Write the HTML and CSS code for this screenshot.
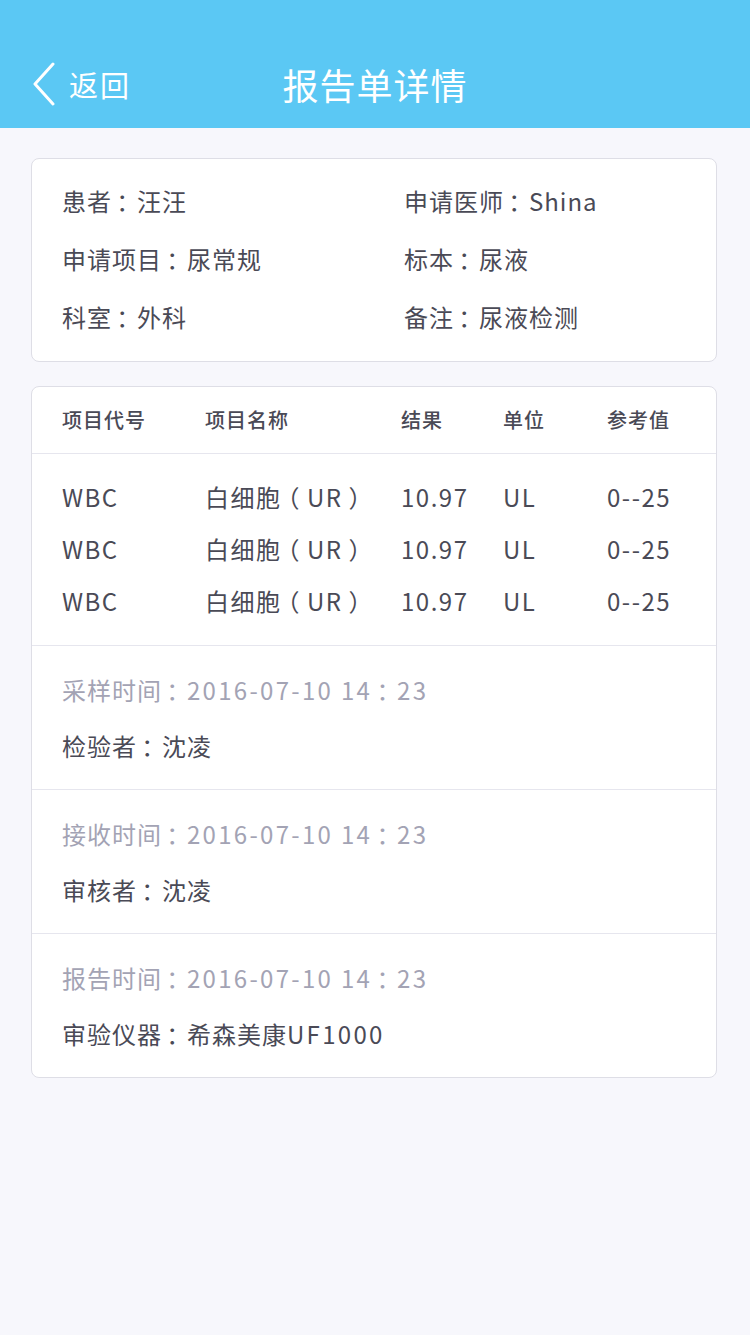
FILE: index.html
```html
<!DOCTYPE html>
<html lang="zh-CN">
<head>
<meta charset="utf-8">
<title>报告单详情</title>
<link rel="stylesheet" href="styles.css">
</head>
<body>
<header class="topbar">
  <div class="back">
    <svg class="chev" width="26" height="44" viewBox="0 0 26 44"><polyline points="22,2 4,22 22,42" fill="none" stroke="#fff" stroke-width="3" stroke-linecap="round" stroke-linejoin="round"/></svg>
    <span class="back-text">返回</span>
  </div>
  <h1 class="title">报告单详情</h1>
</header>
<main class="content">
  <section class="card info">
    <div class="info-row"><span>患者<span class="p">：</span>汪汪</span><span>申请医师<span class="p">：</span>Shina</span></div>
    <div class="info-row"><span>申请项目<span class="p">：</span>尿常规</span><span>标本<span class="p">：</span>尿液</span></div>
    <div class="info-row"><span>科室<span class="p">：</span>外科</span><span>备注<span class="p">：</span>尿液检测</span></div>
  </section>
  <section class="card results">
    <div class="grid head">
      <span>项目代号</span><span>项目名称</span><span>结果</span><span>单位</span><span>参考值</span>
    </div>
    <div class="rows">
      <div class="grid row"><span>WBC</span><span>白细胞<span class="pp">（</span>UR<span class="pp">）</span></span><span>10.97</span><span>UL</span><span>0--25</span></div>
      <div class="grid row"><span>WBC</span><span>白细胞<span class="pp">（</span>UR<span class="pp">）</span></span><span>10.97</span><span>UL</span><span>0--25</span></div>
      <div class="grid row"><span>WBC</span><span>白细胞<span class="pp">（</span>UR<span class="pp">）</span></span><span>10.97</span><span>UL</span><span>0--25</span></div>
    </div>
    <div class="meta">
      <div class="muted">采样时间<span class="p">：</span><span class="num">2016-07-10 14</span><span class="p">：</span><span class="num">23</span></div>
      <div class="dark">检验者<span class="p">：</span>沈凌</div>
    </div>
    <div class="meta">
      <div class="muted">接收时间<span class="p">：</span><span class="num">2016-07-10 14</span><span class="p">：</span><span class="num">23</span></div>
      <div class="dark">审核者<span class="p">：</span>沈凌</div>
    </div>
    <div class="meta">
      <div class="muted">报告时间<span class="p">：</span><span class="num">2016-07-10 14</span><span class="p">：</span><span class="num">23</span></div>
      <div class="dark">审验仪器<span class="p">：</span>希森美康<span class="num">UF1000</span></div>
    </div>
  </section>
</main>
</body>
</html>
```
FILE: styles.css
```css
* { box-sizing: border-box; }
html, body {
  margin: 0;
  padding: 0;
  background: #f7f7fc;
  font-family: "Noto Sans CJK SC", "Noto Sans", sans-serif;
  color: #4a4a56;
}
/* half-width punctuation, padded back to a full em so the glyph sits centred */
.p, .pp {
  font-feature-settings: "halt" 1;
}
.p { padding: 0 0.32em 0 0.18em; }
.pp { padding: 0 0.25em; }
.num {
  letter-spacing: 2.3px;
}
.topbar {
  height: 128px;
  background: #5bc8f4;
  position: relative;
  display: flex;
  align-items: center;
  justify-content: center;
  padding-top: 40px;
}
.back {
  position: absolute;
  left: 31px;
  top: 62px;
  display: flex;
  align-items: center;
  gap: 12px;
}
.chev { display: block; }
.back-text {
  color: #fff;
  font-size: 29px;
  letter-spacing: 2px;
  line-height: 44px;
}
.title {
  margin: 0;
  color: #fff;
  font-size: 36px;
  font-weight: 400;
  letter-spacing: 1px;
  line-height: 48px;
}
.content {
  padding: 30px 33px 0 31px;
  display: flex;
  flex-direction: column;
  gap: 24px;
}
.card {
  background: #fff;
  border: 1px solid #dedee6;
  border-radius: 8px;
}
.info {
  padding: 13px 0 15px 30px;
}
.info-row {
  display: grid;
  grid-template-columns: 342px 1fr;
  font-size: 24px;
  line-height: 58px;
  letter-spacing: 1px;
}
.grid {
  display: grid;
  grid-template-columns: 143px 196px 102px 104px 1fr;
  padding-left: 30px;
}
.head {
  height: 67px;
  align-items: center;
  font-size: 20px;
  font-weight: 500;
  letter-spacing: 1px;
  padding-bottom: 2px;
  border-bottom: 1px solid #e6e6ee;
}
.rows {
  padding: 17px 0 18px;
  border-bottom: 1px solid #e6e6ee;
}
.row {
  font-size: 24px;
  line-height: 52px;
  letter-spacing: 1.5px;
}
.meta {
  padding: 16px 0 15px 30px;
  font-size: 24px;
  line-height: 56px;
  letter-spacing: 1px;
  border-bottom: 1px solid #e6e6ee;
}
.meta:last-child { border-bottom: none; }
.muted { color: #a3a3b4; }
.dark { color: #4a4a56; }
```
